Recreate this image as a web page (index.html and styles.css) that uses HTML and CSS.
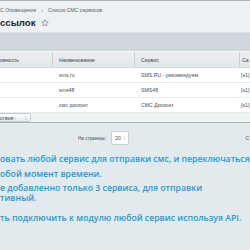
FILE: index.html
```html
<!DOCTYPE html>
<html lang="ru">
<head>
<meta charset="utf-8">
<link rel="stylesheet" href="styles.css">
</head>
<body>
<div class="top">
  <div class="crumbs"><span>С Оповещения</span><span class="sep">›</span><span>Список СМС сервисов</span></div>
  <div class="title"><h1>ссылок</h1>
    <svg class="star" width="8" height="8" viewBox="0 0 10 10"><path d="M5 .8l1.2 2.7 2.9.3-2.2 1.9.7 2.9L5 7.1 2.4 8.6l.7-2.9L.9 3.8l2.9-.3z" fill="none" stroke="#7d8a90" stroke-width=".9"/></svg>
  </div>
</div>
<div class="toolbar"></div>
<div class="grid">
  <div class="row head">
    <div class="c c1">ивность</div>
    <div class="c c2">Наименование</div>
    <div class="c c3">Сервис</div>
    <div class="c c4">Са</div>
  </div>
  <div class="row">
    <div class="c c1"></div>
    <div class="c c2">sms.ru</div>
    <div class="c c3">SMS.RU - рекомендуем</div>
    <div class="c c4">[s1]</div>
  </div>
  <div class="row">
    <div class="c c1"></div>
    <div class="c c2">sms48</div>
    <div class="c c3">SMS48</div>
    <div class="c c4">[s1]</div>
  </div>
  <div class="row">
    <div class="c c1"></div>
    <div class="c c2">смс дисконт</div>
    <div class="c c3">СМС Дисконт</div>
    <div class="c c4">[s1]</div>
  </div>
</div>
<div class="gridfoot">
  <div class="act"><span>ствия -</span><span class="dots">⁝</span></div>
</div>
<div class="pager">
  <span class="lbl">На странице:</span>
  <span class="sel">20 <span class="arr">⁝</span></span>
  <span class="pg">С</span>
</div>
<div class="info">
  <div class="l l1">овать любой сервис для отправки смс, и переключаться</div>
  <div class="l l2">обой момент времени.</div>
  <div class="l l3">е добавленно только 3 сервиса, для отправки</div>
  <div class="l l4">тивный.</div>
  <div class="l l5">ть подключить к модулю любой сервис используя API.</div>
</div>
</body>
</html>
```
FILE: styles.css
```css
html, body { margin: 0; padding: 0; }
body {
  width: 250px; height: 250px; overflow: hidden;
  background: #e3eaed;
  font-family: "Liberation Sans", Arial, sans-serif;
  color: #333;
}
.top {
  height: 31px;
  background: #edf1f3;
  border-top: 1px solid #a8b2b7;
  white-space: nowrap;
}
.crumbs {
  font-size: 5.2px; color: #5a6267;
  padding-top: 5px; height: 8px;
  display: flex; align-items: center; gap: 5px;
}
.sep { color: #6f777b; }
.title { display: flex; align-items: center; gap: 5px; margin-top: 3px; }
h1 { margin: 0; font-size: 9.6px; font-weight: bold; color: #1f2426; }
.star { display: block; margin-top: 1px; }
.toolbar {
  height: 18px;
  background: #cdd7dc;
  border-top: 1px solid #d9e1e4;
}
.grid {
  background: #fff;
  border-top: 1px solid #f3f5f6;
  width: 250px; overflow: hidden;
}
.row { display: grid; grid-template-columns: 53px 82px 105px 10px; height: 15px; border-bottom: 1px solid #e8ebec; box-sizing: border-box; }
.row.head { background: linear-gradient(#eceff0, #e2e7e9); border-bottom: 1px solid #d3d9dc; height: 16px; }
.c { font-size: 5.2px; display: flex; align-items: center; padding-left: 6px; white-space: nowrap; color: #4a4f52; }
.head .c { border-right: 1px solid #c7cfd3; color: #3f4548; }
.head .c1 { padding-left: 0; }
.head .c4 { border-right: none; padding-left: 2px; }
.c4 { padding-left: 1px; }
.gridfoot {
  height: 9px;
  background: #f0f3f4;
  border-bottom: 1px solid #aab4b9;
}
.act {
  width: 31px; height: 9px; box-sizing: border-box;
  background: linear-gradient(#fbfcfc, #e9edef);
  border: 1px solid #c3cbcf; border-left: none;
  border-radius: 0 2px 2px 0;
  font-size: 5.2px; color: #40464a;
  display: flex; align-items: center; justify-content: space-between;
  padding-right: 4px; white-space: nowrap;
}
.pager {
  display: flex; align-items: center;
  margin-top: 8px; height: 14px;
  padding-left: 78px; white-space: nowrap;
  font-size: 4.6px; color: #4a4f52;
}
.sel {
  margin-left: 5px; width: 18px; height: 14px; box-sizing: border-box;
  background: #fff; border: 1px solid #c9d0d4; border-radius: 2px;
  display: flex; align-items: center; justify-content: space-between; padding: 0 3px;
  font-size: 5px;
}
.pg { margin-left: auto; padding-right: 1px; font-size: 5px; }
.info {
  margin-top: 8px;
  font-family: "Open Sans", sans-serif;
  font-weight: 600;
  font-size: 8.7px;
  color: #229ad3;
  white-space: nowrap;
}
.l1 { line-height: 13px; }
.l2 { line-height: 16px; }
.l3 { line-height: 9.5px; margin-top: 2px; }
.l4 { line-height: 9.5px; }
.l5 { line-height: 13px; margin-top: 9px; }
```
